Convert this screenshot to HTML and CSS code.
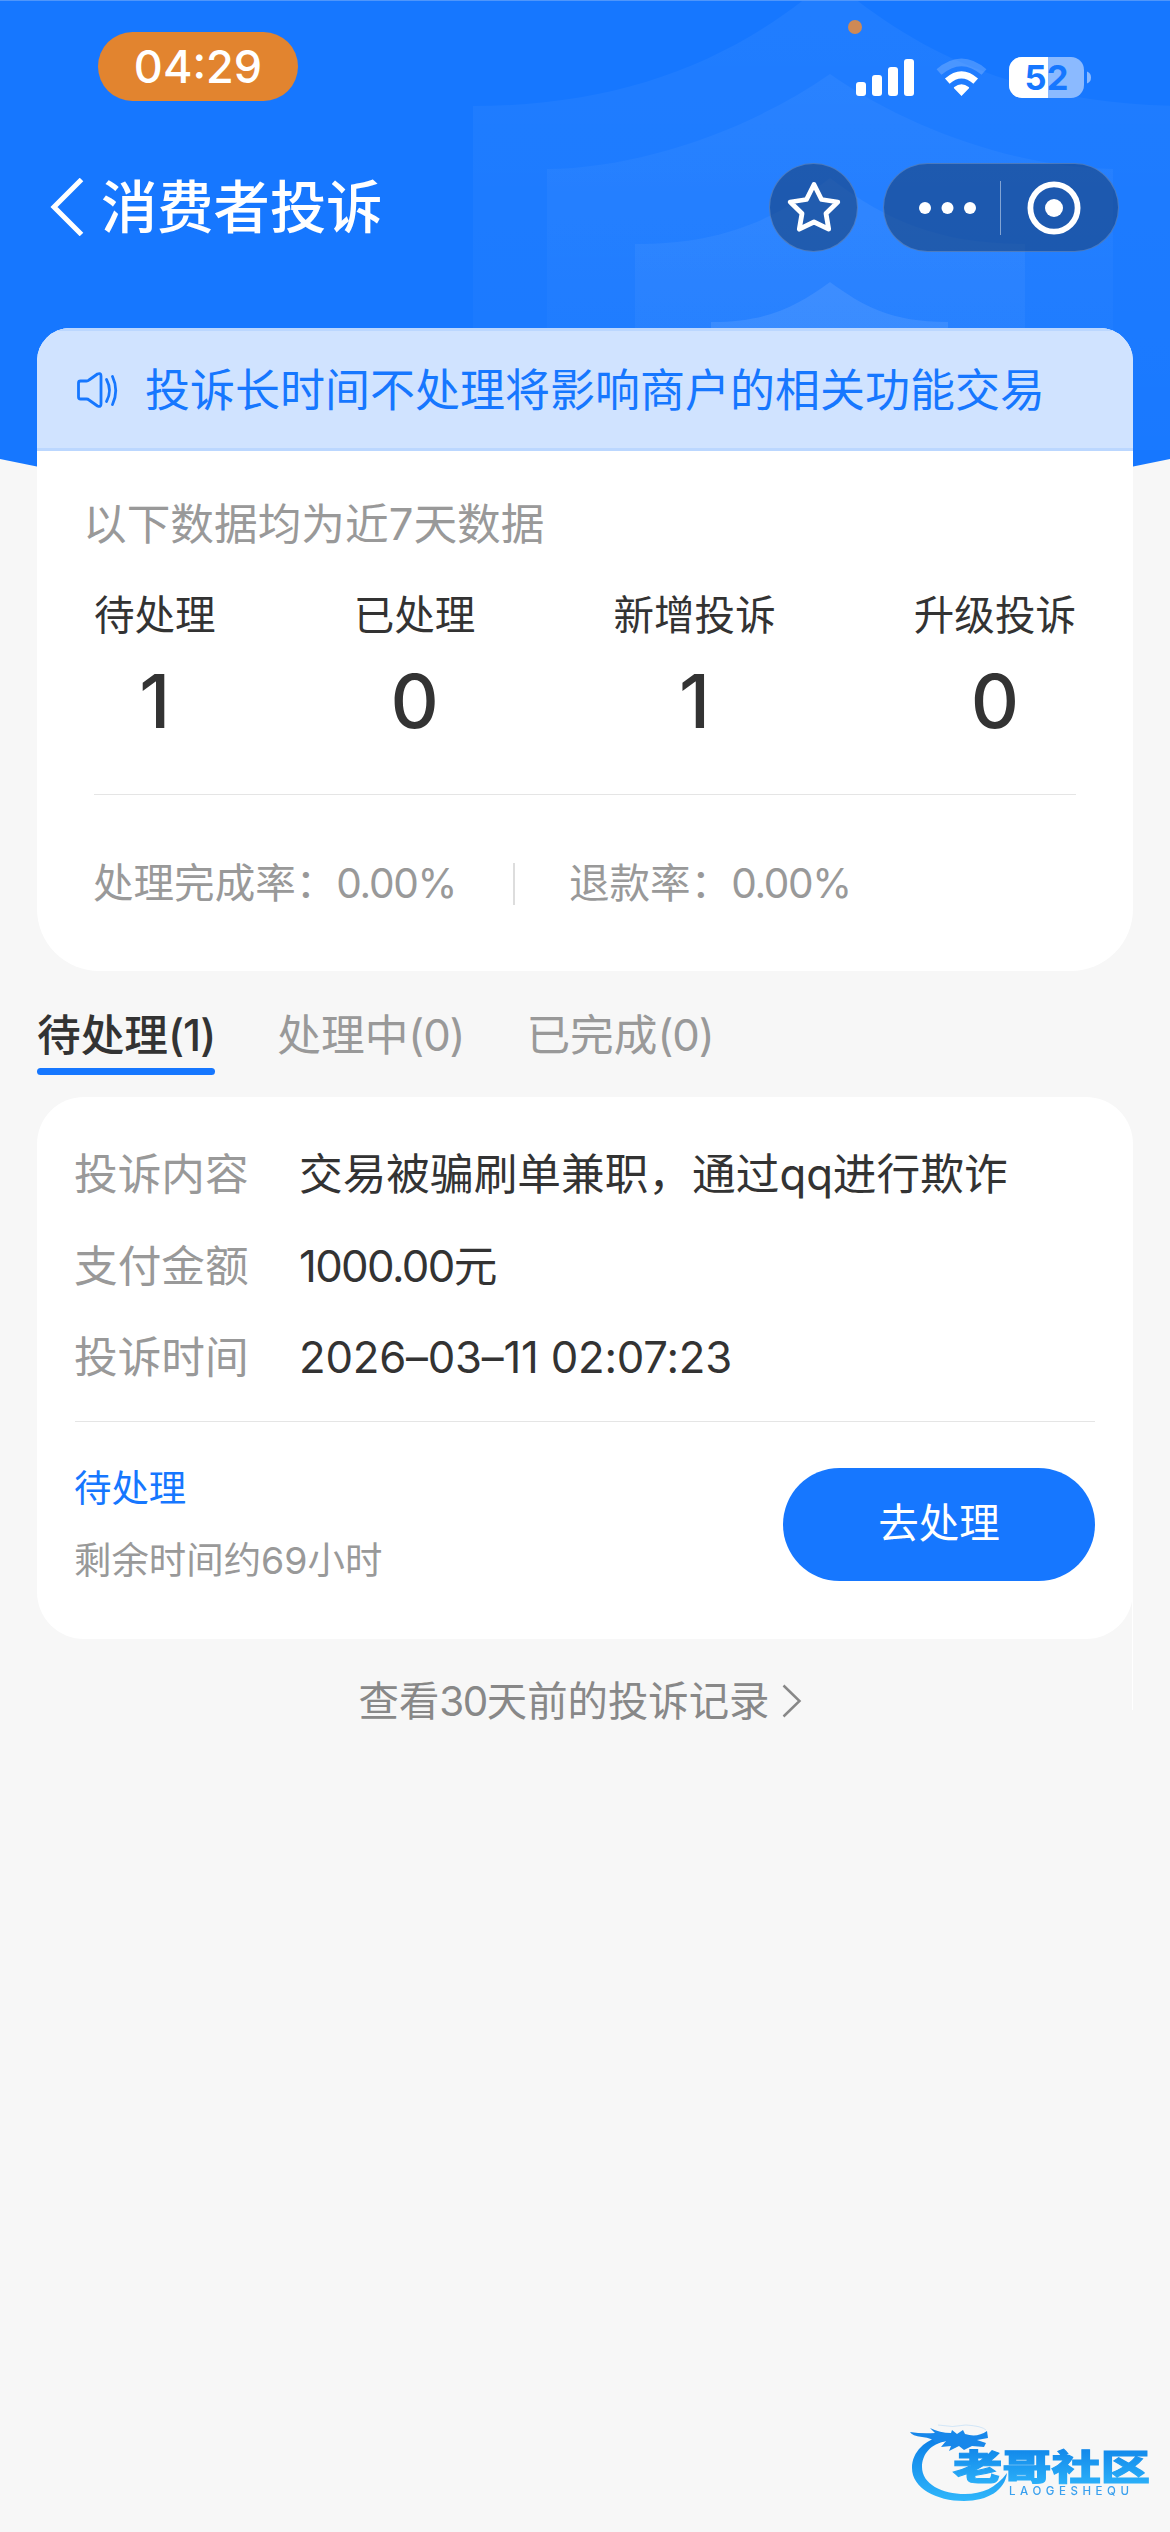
FILE: index.html
```html
<!DOCTYPE html>
<html lang="zh-CN">
<head>
<meta charset="utf-8">
<title>消费者投诉</title>
<link rel="stylesheet" href="styles.css">
</head>
<body>
<div class="page">
  <svg class="backdrop" width="1170" height="480" viewBox="0 0 1170 480" aria-hidden="true">
    <defs>
      <linearGradient id="fade1" gradientUnits="userSpaceOnUse" x1="0" y1="0" x2="0" y2="480"><stop offset="0" stop-color="#fff" stop-opacity=".045"/><stop offset="1" stop-color="#fff" stop-opacity=".012"/></linearGradient>
      <linearGradient id="fade2" gradientUnits="userSpaceOnUse" x1="0" y1="74" x2="0" y2="420"><stop offset="0" stop-color="#fff" stop-opacity=".045"/><stop offset="1" stop-color="#fff" stop-opacity=".01"/></linearGradient>
      <linearGradient id="fade3" gradientUnits="userSpaceOnUse" x1="0" y1="178" x2="0" y2="440"><stop offset="0" stop-color="#fff" stop-opacity=".055"/><stop offset="1" stop-color="#fff" stop-opacity=".02"/></linearGradient>
    </defs>
    <path d="M0 0H1170V459Q585 584 0 459Z" fill="#1677ff"/>
    <path d="M473 106C620 106 735 62 830 -22C925 62 1040 106 1187 106V450H473Z" fill="url(#fade1)"/>
    <path d="M547 169C640 168 750 130 830 74C910 130 1020 168 1113 169V450H547Z" fill="url(#fade2)"/>
    <path d="M635 244C715 244 770 224 830 178C890 224 945 244 1025 244V450H635Z" fill="url(#fade3)"/>
    <path d="M711 322C768 322 797 306 830 282C863 306 891 322 948 322V450H711Z" fill="#fff" fill-opacity=".09"/>
    <path d="M0 .5H1170" stroke="#4f96fb"/>
  </svg>

  <header class="status-bar">
    <span class="clock">04:29</span>
    <i class="mic-dot"></i>
    <svg class="indicators" width="240" height="44" viewBox="854 55 240 44" aria-hidden="true">
      <g fill="#fff">
        <rect x="856" y="82" width="10" height="14" rx="3"/>
        <rect x="872" y="75" width="10" height="21" rx="3"/>
        <rect x="888" y="67" width="10" height="29" rx="3"/>
        <rect x="904" y="59" width="10" height="37" rx="3"/>
        <path d="M961.5 96 L954 88.3 Q953.6 87.6 954.3 87.1 Q961.5 81.2 968.7 87.1 Q969.4 87.6 969 88.3Z"/>
      </g>
      <path d="M947.3 81.2Q961.5 68.6 975.7 81.2" fill="none" stroke="#fff" stroke-width="7"/>
      <path d="M939 72Q961.500 52.600 984 72" fill="none" stroke="#fff" stroke-opacity=".2" stroke-width="7.500"/>
      <clipPath id="cell"><rect x="1009" y="57" width="75" height="41" rx="13"/></clipPath>
      <g clip-path="url(#cell)"><rect x="1009" y="57" width="75" height="41" fill="#8bbaff"/><rect x="1009" y="57" width="39" height="41" fill="#fff"/></g>
      <path d="M1087 71.500Q1091 73 1091 77.500Q1091 82 1087 83.500Z" fill="#8bbaff"/>
      <text class="charge" x="1046.500" y="90.300" text-anchor="middle">52</text>
    </svg>
  </header>

  <nav class="nav">
    <svg class="back" width="35" height="58" viewBox="0 0 35 58" aria-hidden="true"><path d="M31.500 1.500L4 29L31.500 56.500" fill="none" stroke="#fff" stroke-width="5"/></svg>
    <h1 class="title">消费者投诉</h1>
    <button class="round-btn" aria-label="收藏">
      <svg width="60" height="60" viewBox="783 177 60 60"><path d="M813 184.500L820.500 199.500L836.800 202L825 213.500L827.700 229.200L813 222L798.300 229.200L801 213.500L789.200 202L805.500 199.500Z" fill="none" stroke="#fff" stroke-width="4.800" stroke-linejoin="round"/></svg>
    </button>
    <div class="capsule">
      <svg width="234" height="87" viewBox="884 163 234 87" aria-hidden="true">
        <g fill="#fff"><circle cx="925" cy="207" r="6"/><circle cx="947.500" cy="207" r="6"/><circle cx="970" cy="207" r="6"/><circle cx="1054" cy="207" r="9"/></g>
        <path d="M1000.500 180V234" stroke="#fff" stroke-opacity=".45"/>
        <circle cx="1054" cy="207" r="23.600" fill="none" stroke="#fff" stroke-width="5.800"/>
      </svg>
    </div>
  </nav>

  <main class="content">
    <section class="summary">
      <div class="notice">
        <svg width="44" height="40" viewBox="75 369 44 40" fill="none" stroke="#1677ff" stroke-width="2.800" stroke-linecap="round" stroke-linejoin="round" aria-hidden="true">
          <path d="M80.500 380H86.500Q88 380 89 379L97.500 373Q101 371.500 101 375V403Q101 406.500 97.500 405L89 399Q88 398 86.500 398H80.500Q78.500 398 78.500 396V382Q78.500 380 80.500 380Z"/>
          <path d="M106.500 378.500Q112.500 389.500 106.500 400.500"/><path d="M112.500 375.500Q119 389.500 112.500 403.500"/>
        </svg>
        <span>投诉长时间不处理将影响商户的相关功能交易</span>
      </div>
      <div class="summary-body">
        <p class="caption">以下数据均为近7天数据</p>
        <div class="stats">
          <div class="stat"><span>待处理</span><b>1</b></div>
          <div class="stat"><span>已处理</span><b>0</b></div>
          <div class="stat"><span>新增投诉</span><b>1</b></div>
          <div class="stat"><span>升级投诉</span><b>0</b></div>
        </div>
        <div class="rates">
          <span>处理完成率：<span class="rate">0.00%</span></span>
          <i class="bar"></i>
          <span>退款率：<span class="rate">0.00%</span></span>
        </div>
      </div>
    </section>

    <div class="tabs">
      <span class="tab active">待处理<span class="count">(1)</span></span>
      <span class="tab">处理中<span class="count">(0)</span></span>
      <span class="tab">已完成<span class="count">(0)</span></span>
    </div>

    <article class="ticket">
      <dl class="fields">
        <dt>投诉内容</dt><dd>交易被骗刷单兼职，通过qq进行欺诈</dd>
        <dt>支付金额</dt><dd><span class="amount">1000.00</span>元</dd>
        <dt>投诉时间</dt><dd class="time">2026–03–11 02:07:23</dd>
      </dl>
      <div class="ticket-foot">
        <div class="state">
          <span class="pending">待处理</span>
          <span class="remain">剩余时间约69小时</span>
        </div>
        <button class="handle">去处理</button>
      </div>
    </article>

    <a class="history">
      <span>查看<span class="days">30</span>天前的投诉记录</span>
      <svg width="20" height="34" viewBox="0 0 20 34" aria-hidden="true"><path d="M1.500 1.500L17.500 17L1.500 32.500" fill="none" stroke="#888" stroke-width="2.500"/></svg>
    </a>
  </main>
  <i class="seam"></i>

  <svg class="watermark" width="260" height="100" viewBox="900 2415 260 100" aria-hidden="true">
    <defs><linearGradient id="ink" x1="0" y1="0" x2="0" y2="1"><stop offset="0" stop-color="#0b7de6"/><stop offset="1" stop-color="#2fb6fb"/></linearGradient></defs>
    <path d="M944 2436C925 2439 912 2452 912 2468C912 2488 936 2501 964 2501C988 2501 1005 2490 1007 2473C996 2488 982 2494 965 2494C942 2494 922 2484 922 2467C922 2454 931 2444 946 2441Z" fill="url(#ink)"/>
    <path d="M910 2432Q922 2434 935 2433L930 2428Q940 2433 951 2433L952 2430L957 2434L963 2430L965 2434Q977 2438 987 2431L988 2438L977 2440L986 2443L984 2447L972 2446L964 2450L959 2446L949 2451L951 2446L941 2447L946 2441L935 2443Q933 2438 922 2437Q912 2436 910 2432Z" fill="#1787ea"/>
    <path d="M938 2425Q953 2428 966 2425Q982 2426 986 2430" fill="none" stroke="#aed6f8" stroke-opacity=".5"/>
    <text class="wm-name" x="953" y="2480" textLength="197" lengthAdjust="spacingAndGlyphs" fill="url(#ink)" stroke="url(#ink)">老哥社区</text>
    <text class="wm-latin" x="1009" y="2495" textLength="120">LAOGESHEQU</text>
  </svg>
</div>
</body>
</html>
```
FILE: styles.css
```css
* { box-sizing: border-box; }
body, h1, p, dl, dd { margin: 0; }
body {
  background: #f7f7f7;
  font-family: Inter, "Noto Sans CJK SC", sans-serif;
  color: #333;
}
button { border: 0; padding: 0; font: inherit; }

.page {
  position: relative;
  width: 1170px;
  height: 2532px;
  overflow: hidden;
}
.backdrop { position: absolute; left: 0; top: 0; }

/* status bar */
.status-bar {
  position: relative;
  height: 140px;
  padding: 32px 76px 0 98px;
  display: flex;
  justify-content: space-between;
  align-items: flex-start;
}
.clock {
  width: 200px;
  height: 69px;
  border-radius: 35px;
  background: #e2842f;
  color: #fff;
  font-size: 45px;
  font-weight: 500;
  line-height: 70px;
  text-align: center;
}
.mic-dot {
  position: absolute;
  left: 848px;
  top: 20px;
  width: 14px;
  height: 14px;
  border-radius: 50%;
  background: #cf8955;
}
.indicators { margin-top: 23px; }
.charge { font: 700 34.500px Inter, sans-serif; fill: #1677ff; }

/* navigation */
.nav {
  position: relative;
  height: 134px;
  padding: 0 51px 0 50px;
  display: flex;
  align-items: center;
}
.back { flex: none; }
.title {
  flex: 1;
  margin-left: 16px;
  padding-top: 2px;
  color: #fff;
  font-size: 56.300px;
  font-weight: 500;
  line-height: 84px;
}
.round-btn, .capsule {
  height: 89px;
  border: 1px solid rgba(255, 255, 255, .2);
  border-radius: 45px;
  background: rgba(24, 62, 118, .58);
  display: flex;
  align-items: center;
  justify-content: center;
}
.round-btn { width: 89px; margin-right: 25px; }
.capsule { width: 236px; }

/* summary */
.content { position: relative; padding: 54px 37px 0; }
.summary {
  height: 643px;
  border-radius: 33px 33px 62px 62px;
  background: #fff;
  overflow: hidden;
}
.notice {
  height: 123px;
  padding-left: 38px;
  display: flex;
  align-items: center;
  gap: 26px;
  border: solid #bbd7ff;
  border-width: 3px 0;
  background: #d0e3ff;
  color: #1677ff;
  font-size: 45px;
  line-height: 60px;
}
.notice span { padding-top: 2px; }
.summary-body { padding: 44px 57px 0; }
.caption {
  margin-left: -11px;
  color: #999;
  font-size: 43.680px;
  line-height: 60px;
}
.stats {
  height: 240px;
  padding-top: 31px;
  display: flex;
  justify-content: space-between;
  border-bottom: 1px solid #e5e5e5;
}
.stat { display: flex; flex-direction: column; align-items: center; }
.stat span { font-size: 40.560px; line-height: 60px; }
.stat b { margin-top: 10px; font-size: 74.880px; font-weight: 500; line-height: 90px; }
.rates {
  height: 177px;
  margin-left: -1px;
  display: flex;
  align-items: center;
  color: #999;
  font-size: 40.560px;
  line-height: 60px;
}
.rate { letter-spacing: -1.300px; }
.bar { width: 2px; height: 42px; margin: 0 54px 0 57px; background: #ddd; }

/* tabs */
.tabs {
  height: 126px;
  padding-top: 35px;
  display: flex;
  align-items: flex-start;
  gap: 62px;
  color: #999;
  font-size: 43.680px;
  line-height: 60px;
}
.tab { height: 69px; }
.count { letter-spacing: -1.100px; }
.active { position: relative; color: #333; font-weight: 500; }
.active::after {
  content: "";
  position: absolute;
  left: 0;
  right: 0;
  bottom: 0;
  height: 7px;
  border-radius: 4px;
  background: #1677ff;
}

/* complaint */
.ticket {
  height: 542px;
  padding: 32px 38px 0;
  border-radius: 47px;
  background: #fff;
}
.fields {
  height: 293px;
  display: grid;
  grid-template-columns: 225px 1fr;
  grid-auto-rows: 91.500px;
  font-size: 43.680px;
  line-height: 91px;
  border-bottom: 1px solid #e5e5e5;
}
.fields dt { color: #999; text-indent: -1px; }
.fields dd { text-indent: -1px; }
.amount { letter-spacing: -1.600px; }
.time { letter-spacing: -.200px; }
.ticket-foot {
  padding-top: 46px;
  display: flex;
  justify-content: space-between;
}
.state { display: flex; flex-direction: column; gap: 12px; margin: -9px 0 0 -1px; font-size: 37.440px; line-height: 60px; }
.pending { color: #1677ff; }
.remain { color: #999; }
.handle {
  width: 312px;
  height: 113px;
  padding-bottom: 1px;
  border-radius: 57px;
  background: #1677ff;
  color: #fff;
  font-size: 40.560px;
  line-height: 60px;
}
.history {
  margin-top: 33px;
  padding-right: 9px;
  display: flex;
  justify-content: center;
  align-items: center;
  gap: 13px;
  color: #888;
  font-size: 40.400px;
  line-height: 60px;
}
.history svg { margin-top: -3px; }
.days { letter-spacing: -1.500px; }
.seam { position: absolute; left: 1132px; top: 1592px; width: 1px; height: 118px; background: #fff; }

/* watermark */
.watermark { position: absolute; left: 900px; top: 2415px; filter: blur(.6px); }
.wm-name { font: 900 35px "Noto Sans CJK SC", sans-serif; stroke-width: 1px; }
.wm-latin { font: 500 11.500px Inter, sans-serif; fill: #3aa0ee; }
```
